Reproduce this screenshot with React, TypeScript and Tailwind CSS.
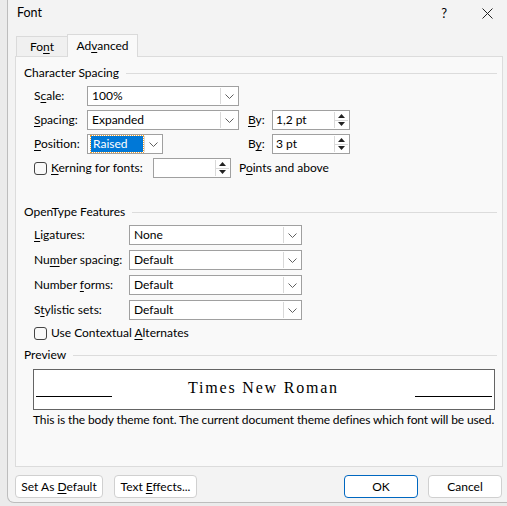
import React from 'react';

const font = { fontFamily: 'Lato, "Noto Sans", sans-serif' };

function U({ children }: { children: React.ReactNode }) {
  return <span className="underline underline-offset-[2px]">{children}</span>;
}

function Chevron() {
  return (
    <svg width="9" height="5" viewBox="0 0 9 5" className="block">
      <path d="M0.5 0.5 L4.5 4.5 L8.5 0.5" fill="none" stroke="#606060" strokeWidth="1" />
    </svg>
  );
}

function Combo({ value, width, selected }: { value: string; width: string; selected?: boolean }) {
  return (
    <div className={`flex h-[20px] ${width} border border-[#a0a0a0] bg-white`}>
      <div className="flex flex-1 items-center pl-[3px] pr-[1px]">
        {selected ? (
          <span className="flex h-[16px] w-full items-center bg-[#0078d7] px-[2px] text-white outline outline-1 outline-dotted outline-[#f0a030]">
            {value}
          </span>
        ) : (
          <span className="pl-[1px]">{value}</span>
        )}
      </div>
      <div className="my-[1px] mr-[1px] flex w-[17px] items-center justify-center border-l border-[#d9d9d9]">
        <Chevron />
      </div>
    </div>
  );
}

function Spinner({ value, width }: { value: string; width: string }) {
  return (
    <div className={`flex h-[20px] ${width} border border-[#a0a0a0] bg-white`}>
      <div className="flex flex-1 items-center pl-[3px]">{value}</div>
      <div className="my-[1px] mr-[1px] flex w-[14px] flex-col border-l border-[#d9d9d9]">
        <div className="flex flex-1 items-center justify-center border-b border-[#d9d9d9]">
          <svg width="7" height="4" viewBox="0 0 7 4">
            <path d="M0 4 L3.5 0 L7 4 Z" fill="#222" />
          </svg>
        </div>
        <div className="flex flex-1 items-center justify-center">
          <svg width="7" height="4" viewBox="0 0 7 4">
            <path d="M0 0 L3.5 4 L7 0 Z" fill="#222" />
          </svg>
        </div>
      </div>
    </div>
  );
}

function Checkbox() {
  return <span className="inline-block h-[13px] w-[13px] shrink-0 rounded-[3px] border border-[#444] bg-[#f9f9f9]" />;
}

function GroupHeader({ title }: { title: string }) {
  return (
    <div className="flex h-[16px] items-center gap-[7px]">
      <span>{title}</span>
      <span className="h-px flex-1 bg-[#dcdcdc]" />
    </div>
  );
}

function Button({ children, primary, width }: { children: React.ReactNode; primary?: boolean; width: string }) {
  return (
    <div
      className={`flex h-[23px] ${width} items-center justify-center rounded-[4px] border bg-white ${
        primary ? 'border-[#0067c0]' : 'border-[#d0d0d0]'
      }`}
    >
      <span className="whitespace-pre">{children}</span>
    </div>
  );
}

export default function App() {
  return (
    <div
      className="h-[506px] w-[507px] overflow-hidden bg-[#ebebeb] pl-[7px] text-[12px] leading-[16px] text-black"
      style={font}
    >
      <div className="h-[503px] rounded-bl-[7px] border-b border-l border-[#bdbdbd] bg-[#f3f3f3]">
        {/* title bar */}
        <div className="flex h-[26px] items-center pl-[9px]">
          <span className="flex-1 text-[12.5px]">Font</span>
          <span className="mr-[35px] text-[13px]">?</span>
          <svg width="11" height="11" viewBox="0 0 11 11" className="mr-[14px]">
            <path d="M0.5 0.5 L10.5 10.5 M10.5 0.5 L0.5 10.5" stroke="#222" strokeWidth="1" />
          </svg>
        </div>

        {/* tabs */}
        <div className="mt-[8px] flex h-[22px] items-end pl-[8px]">
          <div className="flex h-[20px] w-[51px] items-center justify-center border-l border-t border-[#dadada] bg-[#f0f0f0]">
            <span>
              Fo<U>n</U>t
            </span>
          </div>
          <div className="relative z-10 -mb-px flex h-[23px] w-[71px] items-center justify-center border-x border-t border-[#dadada] bg-[#f9f9f9]">
            <span>
              Ad<U>v</U>anced
            </span>
          </div>
        </div>

        {/* panel */}
        <div className="ml-[7px] h-[411px] w-[488px] border border-[#dcdcdc] bg-[#f9f9f9] pl-[8px] pr-[5px]">
          <div className="mt-[8px]">
            <GroupHeader title="Character Spacing" />
          </div>

          <div className="mt-[5px] flex flex-col gap-[4px] pl-[10px]">
            <div className="flex items-center">
              <span className="w-[53px]">
                S<U>c</U>ale:
              </span>
              <Combo value="100%" width="w-[152px]" />
            </div>
            <div className="flex items-center">
              <span className="w-[53px]">
                <U>S</U>pacing:
              </span>
              <Combo value="Expanded" width="w-[152px]" />
              <span className="ml-[9px] w-[24px]">
                <U>B</U>y:
              </span>
              <Spinner value="1,2 pt" width="w-[78px]" />
            </div>
            <div className="flex items-center">
              <span className="w-[53px]">
                <U>P</U>osition:
              </span>
              <Combo value="Raised" width="w-[76px]" selected />
              <span className="ml-[85px] w-[24px]">
                B<U>y</U>:
              </span>
              <Spinner value="3 pt" width="w-[78px]" />
            </div>
            <div className="flex items-center">
              <Checkbox />
              <span className="ml-[4px] w-[102px] whitespace-nowrap">
                <U>K</U>erning for fonts:
              </span>
              <Spinner value="" width="w-[78px]" />
              <span className="ml-[8px]">
                P<U>o</U>ints and above
              </span>
            </div>
          </div>

          <div className="mt-[26px]">
            <GroupHeader title="OpenType Features" />
          </div>

          <div className="mt-[5px] flex flex-col gap-[5px] pl-[10px]">
            {[
              [<><U>L</U>igatures:</>, 'None'],
              [<>Nu<U>m</U>ber spacing:</>, 'Default'],
              [<>Number <U>f</U>orms:</>, 'Default'],
              [<>S<U>t</U>ylistic sets:</>, 'Default'],
            ].map(([label, value], i) => (
              <div key={i} className="flex items-center">
                <span className="w-[95px] whitespace-nowrap">{label}</span>
                <Combo value={value as string} width="w-[173px]" />
              </div>
            ))}
            <div className="flex h-[16px] items-center">
              <Checkbox />
              <span className="ml-[4px]">
                Use Contextual <U>A</U>lternates
              </span>
            </div>
          </div>

          <div className="mt-[6px]">
            <GroupHeader title="Preview" />
          </div>

          <div className="ml-[9px] mt-[6px] flex h-[41px] w-[462px] items-end border border-[#646464] bg-white px-[2px] pb-[12px]">
            <span className="h-px w-[76px] bg-black" />
            <span
              className="mb-[1px] flex-1 text-center text-[16px] tracking-[1.8px]"
              style={{ fontFamily: '"Liberation Serif", "Times New Roman", serif' }}
            >
              Times New Roman
            </span>
            <span className="h-px w-[77px] bg-black" />
          </div>

          <div className="ml-[9px] mt-[2px] whitespace-nowrap tracking-[-0.12px]">
            This is the body theme font. The current document theme defines which font will be used.
          </div>
        </div>

        {/* buttons */}
        <div className="mt-[8px] flex pl-[7px] pr-[5px]">
          <Button width="w-[88px]">
            Set As <U>D</U>efault
          </Button>
          <div className="ml-[11px]">
            <Button width="w-[83px]">
              Text <U>E</U>ffects...
            </Button>
          </div>
          <div className="ml-auto">
            <Button width="w-[74px]" primary>
              OK
            </Button>
          </div>
          <div className="ml-[10px]">
            <Button width="w-[74px]">Cancel</Button>
          </div>
        </div>
      </div>
    </div>
  );
}
